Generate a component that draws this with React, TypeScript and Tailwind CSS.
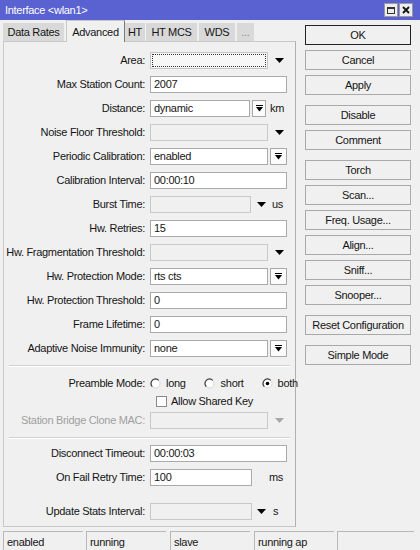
import React from "react";

function Tri({ gray }: { gray?: boolean }) {
  return (
    <svg width="9" height="5" viewBox="0 0 9 5">
      <polygon points="0,0 9,0 4.5,5" fill={gray ? "#a8a8a8" : "#000"} />
    </svg>
  );
}

function DropBtn({ w }: { w: string }) {
  return (
    <div className={"h-[17px] border border-[#a8a8a8] bg-[#fbfbfb] flex items-center justify-center ml-[2px] " + w}>
      <svg width="7" height="7" viewBox="0 0 7 7">
        <rect x="0" y="0" width="7" height="1" fill="#000" />
        <polygon points="0,2 7,2 3.5,6.5" fill="#000" />
      </svg>
    </div>
  );
}

function Field({ w, text, kind }: { w: string; text?: string; kind?: "dis" | "focus" }) {
  if (kind === "focus") {
    return (
      <div className={"h-[17px] border border-[#c4c4c4] bg-[#f7f7f7] p-[1px] " + w}>
        <div className="w-full h-full border border-dotted border-[#333]" />
      </div>
    );
  }
  const cls =
    kind === "dis"
      ? "border-[#c8c8c8] bg-[#f0f0f0]"
      : "border-[#aaaaaa] bg-white";
  return (
    <div className={"h-[17px] border flex items-center pl-[3px] whitespace-nowrap leading-none " + cls + " " + w}>
      {text}
    </div>
  );
}

function Row({ label, children, cls, gray }: { label: string; children?: React.ReactNode; cls?: string; gray?: boolean }) {
  return (
    <div className={"flex items-center " + (cls ?? "h-[24px]")}>
      <div className={"w-[141px] shrink-0 flex justify-end whitespace-nowrap " + (gray ? "text-[#a0a0a0]" : "")}>{label}</div>
      <div className="ml-[5px] flex items-center">{children}</div>
    </div>
  );
}

function Sep() {
  return <div className="mx-[5px] h-[2px] border-t border-[#d0d0d0] border-b border-b-white" />;
}

function Radio({ checked }: { checked?: boolean }) {
  return (
    <svg width="11" height="11" viewBox="0 0 11 11">
      <circle cx="5.5" cy="5.5" r="4.5" fill="#fff" stroke="#d8d8d8" />
      <path d="M2.3 8.7 A4.5 4.5 0 0 1 8.7 2.3" fill="none" stroke="#3a3a3a" strokeWidth="1.2" />
      {checked && <circle cx="5.5" cy="5.5" r="1.8" fill="#000" />}
    </svg>
  );
}

function Btn({ label, cls, ok }: { label: string; cls?: string; ok?: boolean }) {
  return (
    <div
      className={
        "h-[20px] flex items-center justify-center bg-[#f0f0f0] border " +
        (ok ? "border-[#222] " : "border-[#a9a9a9] ") +
        (cls ?? "")
      }
    >
      {label}
    </div>
  );
}

function Cell({ text, cls }: { text?: string; cls: string }) {
  return (
    <div className={"h-[20px] border-t border-l border-[#b8b8b8] bg-[#f0f0f0] flex items-center pl-[3px] pt-[2px] whitespace-nowrap " + cls}>
      {text}
    </div>
  );
}

export default function App() {
  return (
    <div className="w-[420px] h-[550px] bg-[#f0f0f0] flex flex-col overflow-hidden font-['Liberation_Sans',Arial,sans-serif] text-[11px] tracking-[-0.3px] text-[#151515]">
      {/* title bar */}
      <div className="h-[20px] shrink-0 bg-[#5a61d0] flex items-center pl-[5px] pr-[7px]">
        <span className="text-white">Interface &lt;wlan1&gt;</span>
        <div className="ml-auto flex gap-[1px]">
          <div className="w-[14px] h-[14px] bg-[#ededed] border border-[#9a9a9a] flex items-center justify-center">
            <div className="w-[8px] h-[7px] border border-[#333] border-t-2" />
          </div>
          <div className="w-[14px] h-[14px] bg-[#ededed] border border-[#9a9a9a] flex items-center justify-center">
            <svg width="8" height="8" viewBox="0 0 8 8">
              <path d="M1 1 L7 7 M7 1 L1 7" stroke="#111" strokeWidth="1.8" />
            </svg>
          </div>
        </div>
      </div>

      <div className="flex h-[510px] shrink-0">
        {/* left column */}
        <div className="ml-[3px] w-[293px] flex flex-col pb-[3px]">
          <div className="h-[22px] flex items-end shrink-0 relative z-10">
            <div className="w-[61px] h-[18px] bg-[#d9d9d9] flex items-center justify-center mb-[1px]">Data Rates</div>
            <div className="ml-[2px] w-[59px] h-[22px] bg-[#f0f0f0] border-t border-l border-r border-[#c8c8c8] border-r-[#7a7a7a] flex items-start justify-center pt-[3px]">Advanced</div>
            <div className="w-[20px] h-[18px] bg-[#d9d9d9] flex items-center justify-center mb-[1px]">HT</div>
            <div className="ml-[1px] w-[51px] h-[18px] bg-[#d9d9d9] flex items-center justify-center mb-[1px]">HT MCS</div>
            <div className="ml-[2px] w-[36px] h-[18px] bg-[#d9d9d9] flex items-center justify-center mb-[1px]">WDS</div>
            <div className="ml-[2px] w-[17px] h-[18px] bg-[#d9d9d9] flex items-center justify-center mb-[1px] text-[#888]">...</div>
          </div>
          <div className="flex-1 -mt-px border border-[#c8c8c8] border-r-[#b0b0b0] bg-[#f0f0f0] pt-[6px] flex flex-col">
            <Row label="Area:">
              <Field w="w-[118px]" kind="focus" />
              <div className="w-[19px] flex justify-center pl-[3px]"><Tri /></div>
            </Row>
            <Row label="Max Station Count:">
              <Field w="w-[137px]" text="2007" />
            </Row>
            <Row label="Distance:">
              <Field w="w-[100px]" text="dynamic" />
              <DropBtn w="w-[14px]" />
              <span className="ml-[4px]">km</span>
            </Row>
            <Row label="Noise Floor Threshold:">
              <Field w="w-[118px]" kind="dis" />
              <div className="w-[19px] flex justify-center pl-[3px]"><Tri /></div>
            </Row>
            <Row label="Periodic Calibration:">
              <Field w="w-[118px]" text="enabled" />
              <DropBtn w="w-[17px]" />
            </Row>
            <Row label="Calibration Interval:">
              <Field w="w-[137px]" text="00:00:10" />
            </Row>
            <Row label="Burst Time:">
              <Field w="w-[101px]" kind="dis" />
              <div className="ml-[6px]"><Tri /></div>
              <span className="ml-[6px]">us</span>
            </Row>
            <Row label="Hw. Retries:">
              <Field w="w-[137px]" text="15" />
            </Row>
            <Row label="Hw. Fragmentation Threshold:">
              <Field w="w-[118px]" kind="dis" />
              <div className="w-[19px] flex justify-center pl-[3px]"><Tri /></div>
            </Row>
            <Row label="Hw. Protection Mode:">
              <Field w="w-[118px]" text="rts cts" />
              <DropBtn w="w-[17px]" />
            </Row>
            <Row label="Hw. Protection Threshold:">
              <Field w="w-[137px]" text="0" />
            </Row>
            <Row label="Frame Lifetime:">
              <Field w="w-[137px]" text="0" />
            </Row>
            <Row label="Adaptive Noise Immunity:">
              <Field w="w-[118px]" text="none" />
              <DropBtn w="w-[17px]" />
            </Row>

            <div className="mt-[5px]"><Sep /></div>

            <Row label="Preamble Mode:" cls="h-[18px] mt-[7px]">
              <Radio />
              <span className="ml-[5px]">long</span>
              <div className="ml-[18px]"><Radio /></div>
              <span className="ml-[6px]">short</span>
              <div className="ml-[18px]"><Radio checked /></div>
              <span className="ml-[5px]">both</span>
            </Row>
            <Row label="" cls="h-[19px]">
              <div className="ml-[6px] w-[11px] h-[11px] border border-[#8a8a8a] bg-white" />
              <span className="ml-[4px]">Allow Shared Key</span>
            </Row>
            <Row label="Station Bridge Clone MAC:" cls="h-[19px]" gray>
              <Field w="w-[118px]" kind="dis" />
              <div className="w-[19px] flex justify-center pl-[3px]"><Tri gray /></div>
            </Row>

            <div className="mt-[7px]"><Sep /></div>

            <Row label="Disconnect Timeout:" cls="h-[24px] mt-[2px]">
              <Field w="w-[137px]" text="00:00:03" />
            </Row>
            <Row label="On Fail Retry Time:">
              <Field w="w-[102px]" text="100" />
              <span className="ml-[17px]">ms</span>
            </Row>
            <Row label="Update Stats Interval:" cls="h-[24px] mt-[10px]">
              <Field w="w-[102px]" kind="dis" />
              <div className="ml-[5px]"><Tri /></div>
              <span className="ml-[7px]">s</span>
            </Row>
          </div>
        </div>

        {/* buttons */}
        <div className="ml-[9px] w-[106px] flex flex-col pt-[5px]">
          <Btn label="OK" ok />
          <Btn label="Cancel" cls="mt-[5px]" />
          <Btn label="Apply" cls="mt-[5px]" />
          <Btn label="Disable" cls="mt-[10px]" />
          <Btn label="Comment" cls="mt-[5px]" />
          <Btn label="Torch" cls="mt-[10px]" />
          <Btn label="Scan..." cls="mt-[5px]" />
          <Btn label="Freq. Usage..." cls="mt-[5px]" />
          <Btn label="Align..." cls="mt-[5px]" />
          <Btn label="Sniff..." cls="mt-[5px]" />
          <Btn label="Snooper..." cls="mt-[5px]" />
          <Btn label="Reset Configuration" cls="mt-[10px]" />
          <Btn label="Simple Mode" cls="mt-[10px]" />
        </div>
      </div>

      {/* status bar */}
      <div className="h-[20px] shrink-0 flex pl-[3px] pt-px">
        <Cell text="enabled" cls="w-[80px]" />
        <Cell text="running" cls="ml-[3px] w-[80px]" />
        <Cell text="slave" cls="ml-[4px] w-[80px]" />
        <Cell text="running ap" cls="ml-[4px] w-[80px]" />
        <Cell cls="ml-[3px] w-[77px]" />
      </div>
    </div>
  );
}
